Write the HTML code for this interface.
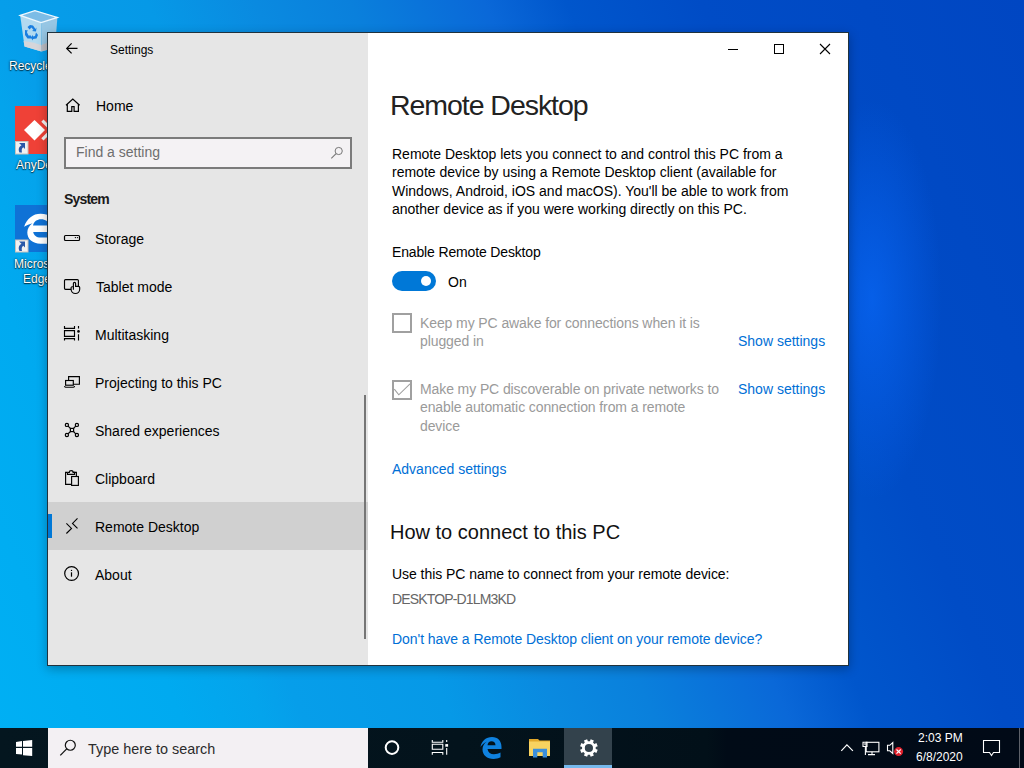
<!DOCTYPE html>
<html><head><meta charset="utf-8">
<style>
*{margin:0;padding:0;box-sizing:border-box}
html,body{width:1024px;height:768px;overflow:hidden}
body{position:relative;font-family:"Liberation Sans",sans-serif;color:#000;
background:linear-gradient(67deg,#00b0f4 0%,#00aaf0 15%,#04a4ec 21%,#069eea 24%,#0699e7 35%,#0a8ae0 43%,#0a80dc 50%,#0a68d8 60%,#0056cc 66%,#004cc6 76%,#0046c2 100%);}
.a{position:absolute}
.t{position:absolute;white-space:nowrap}
.f14{font-size:14px;line-height:18px}
#desk2{position:absolute;left:0;top:0;width:1024px;height:768px;
background:radial-gradient(ellipse 70px 200px at 872px 300px,rgba(10,108,255,.6),rgba(10,108,255,0) 100%);}
.dtxt{position:absolute;color:#fff;font-size:12px;line-height:14px;text-shadow:0 0 2px rgba(0,0,0,.9),0 1px 1px rgba(0,0,0,.6);white-space:nowrap}
#win{position:absolute;left:47px;top:32px;width:802px;height:634px;border:1px solid rgba(8,28,40,.9);background:#fff;
box-shadow:0 3px 10px rgba(0,0,0,.28)}
#taskbar{position:absolute;left:0;top:728px;width:1024px;height:40px;background:linear-gradient(to right,#04161f 0%,#03131c 45%,#021019 69%,#010b17 71%,#010a17 100%)}
svg{overflow:visible}
</style></head><body>
<div id="desk2"></div>

<!-- Desktop icons -->
<svg class="a" style="left:0;top:0" width="64" height="60" viewBox="0 0 64 60">
  <path d="M20.2 15.4 L41.1 22.6 L41.4 51.6 L24.5 46.4Z" fill="#b2daf0"/>
  <path d="M41.1 22.6 L57.4 17.4 L55 47.7 L41.4 51.6Z" fill="#96c6e4"/>
  <path d="M20.2 15.4 L34.9 10.6 L57.4 17.4 L41.1 22.6Z" fill="#7cbce6"/>
  <path d="M23.6 41 Q33 42 41.3 45 L41.4 51.6 L24.5 46.4Z" fill="#d6d6da"/>
  <path d="M41.3 45 Q48 42 55.5 41 L55 47.7 L41.4 51.6Z" fill="#bcbcc2"/>
  <path d="M20.2 15.4 L34.9 10.6 L57.4 17.4 L41.1 22.6Z" fill="none" stroke="#eef8fe" stroke-width="1.3"/>
  <g fill="#1a7ee0">
    <path d="M27.5 27 L30 25 L33 25.5 L35.5 29 L36.5 27.5 L36 31.5 L32 31 L33.5 30 L31.5 27.5 L29.5 29.5Z"/>
    <path d="M25 30 L28 30.5 L26.8 32 L28.5 35.5 L31 35.5 L31 38.5 L27.5 38.5 L25 35 Z"/>
    <path d="M36 32.5 L38 35 L36.5 38.5 L33 39 L33 40.5 L30.5 37.5 L33 35 L33 36.5 L35 36 Z"/>
  </g>
</svg>
<div class="dtxt" style="left:9px;top:59px">Recycle Bin</div>

<div class="a" style="left:15px;top:106px;width:48px;height:48px;background:#ef4137"></div>
<svg class="a" style="left:15px;top:106px" width="48" height="48" viewBox="0 0 48 48">
  <path d="M19.5 14 L30 24 L19.5 34.5 L9 24Z" fill="#fff"/>
  <path d="M28.5 13.5 L39 24 L28.5 34.5 L26.3 32.3 L34.6 24 L26.3 15.7Z" fill="#f4f4f4"/>
  <rect x="0.5" y="35.5" width="12.5" height="12.5" fill="#f2f2f2" stroke="#c9c2bc" stroke-width="1"/>
  <path d="M4 37 H10 V43 L8.3 41.3 C6.5 42.5 6.5 44.5 7 46.5 H4.5 C3.2 44 3.5 41 6.5 39.3 Z" fill="#2a58a8"/>
</svg>
<div class="dtxt" style="left:16px;top:158px">AnyDesk</div>

<div class="a" style="left:15px;top:205px;width:48px;height:47px;background:#0f72d6"></div>
<svg class="a" style="left:15px;top:205px" width="48" height="47" viewBox="0 0 48 47">
  <path fill="#fff" fill-rule="evenodd" d="M9.1 21.8 C12 13.5 18 8.8 25.5 8.8 C35 8.8 42 14 42 22 V27 H18.2 C18.8 30.5 21.5 32.5 25.5 32.5 H42 V38.7 H25.5 C17.5 38.7 12.3 34 12.3 27.5 C12.3 23.5 14.5 20.5 17.5 18.3 C14.5 19 11.5 20.3 9.1 21.8 Z M18 20.5 H34 C33.5 16.5 30.5 14.3 26 14.3 C22 14.3 19 16.5 18 20.5 Z"/>
  <rect x="0.5" y="35" width="12.5" height="12" fill="#f2f2f2" stroke="#c9c2bc" stroke-width="1"/>
  <path d="M4 36.5 H10 V42.5 L8.3 40.8 C6.5 42 6.5 44 7 46 H4.5 C3.2 43.5 3.5 40.5 6.5 38.8 Z" fill="#2a58a8"/>
</svg>
<div class="dtxt" style="left:14px;top:257px">Microsoft</div>
<div class="dtxt" style="left:23px;top:272px">Edge</div>

<!-- Window -->
<div id="win"></div>
<div class="a" style="left:48px;top:33px;width:320px;height:632px;background:#e6e6e6"></div>
<div class="a" style="left:368px;top:33px;width:480px;height:632px;background:#fff"></div>

<!-- Sidebar -->
<svg class="a" style="left:60px;top:37px" width="24" height="24" viewBox="0 0 24 24"><path d="M17.5 11.4 H6.9 M11.6 6.4 L6.7 11.4 L11.6 16.4" fill="none" stroke="#000" stroke-width="1.2"/></svg>
<div class="t" style="left:110px;top:42px;font-size:12px;line-height:16px">Settings</div>

<svg class="a" style="left:60px;top:93px" width="24" height="24" viewBox="0 0 24 24"><path d="M6 12.3 L12.8 6 L19.6 12.3 M7.3 11.2 V18.3 H11.8 V13.6 H14.1 V18.3 H18.4 V11.2" fill="none" stroke="#000" stroke-width="1.2" stroke-linejoin="miter"/></svg>
<div class="t f14" style="left:96px;top:97px">Home</div>

<div class="a" style="left:64px;top:137px;width:288px;height:32px;border:2px solid #7b7b7b;background:#f4f2f4"></div>
<div class="t f14" style="left:76px;top:143px;color:#6e6e6e">Find a setting</div>
<svg class="a" style="left:328px;top:144px" width="16" height="16" viewBox="0 0 16 16"><circle cx="10.7" cy="7" r="3.6" fill="none" stroke="#777" stroke-width="1"/><path d="M8.1 9.6 L3.3 14.4" stroke="#777" stroke-width="1.1"/></svg>

<div class="t" style="left:64px;top:190px;font-size:14px;line-height:18px;font-weight:bold;letter-spacing:-0.8px;color:#1a1a1a">System</div>

<!-- nav items -->
<svg class="a" style="left:60px;top:226px" width="24" height="24" viewBox="0 0 24 24"><rect x="4.5" y="9.5" width="15" height="5" rx="1" fill="none" stroke="#000" stroke-width="1.2"/><circle cx="15.4" cy="11.6" r=".7"/><circle cx="17.5" cy="11.6" r=".7"/></svg>
<div class="t f14" style="left:95px;top:230px">Storage</div>

<svg class="a" style="left:60px;top:274px" width="24" height="24" viewBox="0 0 24 24"><g fill="none" stroke="#000" stroke-width="1.15"><path d="M11.1 15.3 H5.5 Q4.5 15.3 4.5 14.3 V6.6 Q4.5 5.6 5.5 5.6 H17.4 Q18.4 5.6 18.4 6.6 V12.3"/><path d="M13.4 15.8 V9.4 A1.1 1.1 0 0 1 15.6 9.4 V12.3 H18.4 Q19.7 12.3 19.7 13.6 V15.3 A4.3 4.2 0 0 1 11.1 15.3 V13.6 Q11.1 12.5 13.4 12.5"/></g></svg>
<div class="t f14" style="left:96px;top:278px">Tablet mode</div>

<svg class="a" style="left:60px;top:320px" width="24" height="24" viewBox="0 0 24 24"><g fill="none" stroke="#000" stroke-width="1.15"><path d="M4.5 6 V8.4 H14.5 V6 M4.5 10.6 H14.5 V16.4 H4.5 Z M4.5 20.5 V18.6 H14.5 V20.5 M18.5 6 V8.4 M18.5 14.2 V20.5"/></g><circle cx="18.5" cy="11.4" r="1.3"/></svg>
<div class="t f14" style="left:95px;top:326px">Multitasking</div>

<svg class="a" style="left:60px;top:370px" width="24" height="24" viewBox="0 0 24 24"><g fill="none" stroke="#000" stroke-width="1.15"><path d="M8.6 10.5 V6.6 H19.4 V14.2 H13.3"/><rect x="5.6" y="10.5" width="7.7" height="4.7"/><path d="M4.6 16 Q4.6 17.2 5.6 17.2 H13.5 Q14.5 17.2 14.5 16"/></g></svg>
<div class="t f14" style="left:95px;top:374px">Projecting to this PC</div>

<svg class="a" style="left:60px;top:418px" width="24" height="24" viewBox="0 0 24 24"><g fill="none" stroke="#000" stroke-width="1.2"><circle cx="6.9" cy="6.9" r="1.6"/><circle cx="16.9" cy="6.9" r="1.6"/><circle cx="6.9" cy="17" r="1.6"/><circle cx="16.9" cy="17" r="1.6"/><rect x="10.4" y="10.4" width="3.2" height="3.2"/><path d="M8.1 8.1 L10.4 10.4 M15.7 8.1 L13.6 10.4 M8.1 15.8 L10.4 13.6 M15.7 15.8 L13.6 13.6"/></g></svg>
<div class="t f14" style="left:95px;top:422px">Shared experiences</div>

<svg class="a" style="left:60px;top:466px" width="24" height="24" viewBox="0 0 24 24"><g fill="none" stroke="#000" stroke-width="1.15"><path d="M11.4 18.4 H5.6 V6.4 H7.5 M13.1 6.4 H16.4 V10.4"/><path d="M7.5 6.4 V8.3 H14.6 V6.4 H13.1 Q13.1 4.6 11.1 4.6 Q9.3 4.6 9.3 6.4 H7.5"/><rect x="11.6" y="10.5" width="6.8" height="8.9"/></g></svg>
<div class="t f14" style="left:95px;top:470px">Clipboard</div>

<div class="a" style="left:48px;top:502px;width:320px;height:48px;background:#d0d0d0"></div>
<div class="a" style="left:48px;top:514px;width:4px;height:24px;background:#0078d7"></div>
<svg class="a" style="left:60px;top:514px" width="24" height="24" viewBox="0 0 24 24"><path d="M6.4 9.4 L11.5 14.4 L6.4 19.5 M17.5 4.4 L12.5 9.4 L17.5 14.4" fill="none" stroke="#000" stroke-width="1.1"/></svg>
<div class="t f14" style="left:95px;top:518px">Remote Desktop</div>

<svg class="a" style="left:60px;top:562px" width="24" height="24" viewBox="0 0 24 24"><circle cx="11.6" cy="11.5" r="6.9" fill="none" stroke="#000" stroke-width="1.2"/><circle cx="11.5" cy="8.4" r=".7"/><path d="M11.5 10.3 V14.7" stroke="#000" stroke-width="1.2"/></svg>
<div class="t f14" style="left:95px;top:566px">About</div>

<div class="a" style="left:364px;top:395px;width:2px;height:244px;background:#767676"></div>

<!-- Title buttons -->
<div class="a" style="left:728px;top:49px;width:10px;height:1px;background:#000"></div>
<div class="a" style="left:774px;top:44px;width:10px;height:10px;border:1px solid #000"></div>
<svg class="a" style="left:819px;top:43px" width="12" height="12" viewBox="0 0 12 12"><path d="M1 1 L11 11 M11 1 L1 11" stroke="#000" stroke-width="1.1"/></svg>

<!-- Content -->
<div class="t" style="left:390px;top:87px;font-size:28.5px;line-height:36px;letter-spacing:-1.05px;color:#222">Remote Desktop</div>

<div class="t" style="left:392px;top:145px;font-size:14px;line-height:18.4px">Remote Desktop lets you connect to and control this PC from a<br>remote device by using a Remote Desktop client (available for<br>Windows, Android, iOS and macOS). You'll be able to work from<br>another device as if you were working directly on this PC.</div>

<div class="t f14" style="left:392px;top:243px;letter-spacing:-0.15px">Enable Remote Desktop</div>
<div class="a" style="left:392px;top:271px;width:44px;height:20px;border-radius:10px;background:#0078d7"></div>
<div class="a" style="left:421px;top:276px;width:10px;height:10px;border-radius:5px;background:#fff"></div>
<div class="t f14" style="left:448px;top:273px">On</div>

<div class="a" style="left:392px;top:313px;width:20px;height:20px;border:2px solid #a0a0a0"></div>
<div class="t" style="left:420px;top:314px;font-size:14px;line-height:18.4px;color:#9a9a9a;letter-spacing:-0.1px">Keep my PC awake for connections when it is<br>plugged in</div>
<div class="t f14" style="left:738px;top:332px;color:#006fd6">Show settings</div>

<div class="a" style="left:392px;top:380px;width:20px;height:20px;border:2px solid #a0a0a0"></div>
<svg class="a" style="left:392px;top:380px" width="20" height="20" viewBox="0 0 20 20"><path d="M2.3 9.2 L6.8 14.8 L18 3.8" fill="none" stroke="#a0a0a0" stroke-width="1.1"/></svg>
<div class="t" style="left:420px;top:380px;font-size:14px;line-height:18.4px;color:#9a9a9a;letter-spacing:-0.1px">Make my PC discoverable on private networks to<br>enable automatic connection from a remote<br>device</div>
<div class="t f14" style="left:738px;top:380px;color:#006fd6">Show settings</div>

<div class="t f14" style="left:392px;top:460px;color:#006fd6">Advanced settings</div>

<div class="t" style="left:390px;top:518px;font-size:20px;line-height:28px;color:#111">How to connect to this PC</div>
<div class="t f14" style="left:392px;top:565px;letter-spacing:-0.05px">Use this PC name to connect from your remote device:</div>
<div class="t f14" style="left:392px;top:590px;color:#666;letter-spacing:-0.85px">DESKTOP-D1LM3KD</div>
<div class="t f14" style="left:392px;top:630px;color:#006fd6;letter-spacing:-0.05px">Don't have a Remote Desktop client on your remote device?</div>

<!-- Taskbar -->
<div id="taskbar"></div>
<svg class="a" style="left:16px;top:740px" width="16" height="16" viewBox="0 0 16 16"><path d="M0 1.9 L6 1 V6.8 H0Z M7 0.9 L16.2 -0.1 V6.8 H7Z M0 8 H6 V14.6 L0 14Z M7 8 H16.2 V16 L7 15.2Z" fill="#fff"/></svg>
<div class="a" style="left:48px;top:728px;width:320px;height:40px;background:#f3f0f3"></div>
<svg class="a" style="left:52px;top:732px" width="32" height="32" viewBox="0 0 32 32"><circle cx="18.3" cy="13.25" r="5" fill="none" stroke="#111" stroke-width="1.2"/><path d="M14.7 16.9 L8.3 23.4" stroke="#111" stroke-width="1.3"/></svg>
<div class="t" style="left:88px;top:740px;font-size:14.4px;line-height:18px;color:#2b2b2b">Type here to search</div>

<svg class="a" style="left:376px;top:732px" width="32" height="32" viewBox="0 0 32 32"><circle cx="16" cy="15.6" r="6.3" fill="none" stroke="#fff" stroke-width="2"/></svg>
<svg class="a" style="left:428px;top:736px" width="24" height="24" viewBox="0 0 24 24"><g fill="none" stroke="#fff" stroke-width="1.1"><path d="M4.3 4 V6.2 H14.8 V4 M4.3 8.3 H14.8 V13.2 H4.3Z M4.3 18.8 V16.5 H14.8 V18.8 M18.7 4 V6 M18.7 12 V18.8"/></g><rect x="17.3" y="8.1" width="2.8" height="2.6" fill="#fff"/></svg>
<svg class="a" style="left:480px;top:737px" width="22" height="22" viewBox="0 0 22 22"><path d="M0.5 10 C1.5 4 6 0 12 0 C18 0 21.5 4 21.5 10 L21.5 12 L7.5 12 C8 15.5 10.5 17.2 14 17.2 C16.5 17.2 18.5 16.6 20.5 15.5 L20.5 20.3 C18.5 21.5 16 22 13.5 22 C7 22 2.5 18 2.5 12.5 C2.5 9 4 6.5 7 4.5 C4.5 5.5 2 7.5 0.5 10 Z M7.5 8.2 L15.5 8.2 C15.5 5.8 13.8 4.3 11.5 4.3 C9.3 4.3 7.8 5.8 7.5 8.2 Z" fill="#0f82e0"/></svg>
<svg class="a" style="left:529px;top:739px" width="22" height="19" viewBox="0 0 22 19"><path d="M0 0 H9 L10.5 1.5 H21 V4 H0Z" fill="#e2a82a"/><rect x="0" y="2.5" width="21" height="14.5" fill="#f8d360"/><path d="M4 18.5 V9.8 H18 V18.5 H13.7 V13.3 H8.3 V18.5Z" fill="#3b8fdb"/></svg>

<div class="a" style="left:564px;top:728px;width:48px;height:37px;background:#33424c"></div>
<div class="a" style="left:564px;top:765px;width:48px;height:3px;background:#76b9ed"></div>

<svg class="a" style="left:572px;top:732px" width="32" height="32" viewBox="0 0 32 32"><g transform="translate(16.9 16)"><path fill="#fff" fill-rule="evenodd" d="M1.02 -6.82 L1.79 -8.82 L4.97 -7.50 L4.10 -5.55 L5.55 -4.10 L7.50 -4.97 L8.82 -1.79 L6.82 -1.02 L6.82 1.02 L8.82 1.79 L7.50 4.97 L5.55 4.10 L4.10 5.55 L4.97 7.50 L1.79 8.82 L1.02 6.82 L-1.02 6.82 L-1.79 8.82 L-4.97 7.50 L-4.10 5.55 L-5.55 4.10 L-7.50 4.97 L-8.82 1.79 L-6.82 1.02 L-6.82 -1.02 L-8.82 -1.79 L-7.50 -4.97 L-5.55 -4.10 L-4.10 -5.55 L-4.97 -7.50 L-1.79 -8.82 L-1.02 -6.82Z M0 -4.1 A4.1 4.1 0 1 0 0 4.1 A4.1 4.1 0 1 0 0 -4.1Z"/></g></svg>

<svg class="a" style="left:836px;top:736px" width="24" height="24" viewBox="0 0 24 24"><path d="M5.3 14.8 L10.9 8.8 L16.9 14.8" fill="none" stroke="#fff" stroke-width="1.2"/></svg>
<svg class="a" style="left:860px;top:738px" width="24" height="20" viewBox="0 0 24 20"><g fill="none" stroke="#fff" stroke-width="1.1"><rect x="6.2" y="4.3" width="12.7" height="9.5"/><path d="M12 13.8 V16.6 M8 16.6 H15 M3 4.3 H7 V8.5 H3 Z M5.4 8.5 V17"/></g><path d="M3.8 5.5 L6.2 5.5 L5 7.2Z" fill="#fff"/></svg>
<svg class="a" style="left:884px;top:738px" width="24" height="20" viewBox="0 0 24 20"><path d="M3.5 7.3 H5.8 L8.8 4.5 V15.5 L5.8 12.8 H3.5Z" fill="none" stroke="#fff" stroke-width="1.1"/><circle cx="14.6" cy="13.6" r="4.5" fill="#e0202c"/><path d="M12.5 11.5 L16.7 15.7 M16.7 11.5 L12.5 15.7" stroke="#fff" stroke-width="1.2"/></svg>
<div class="t" style="left:918px;top:731px;font-size:12px;line-height:15px;color:#fff">2:03 PM</div>
<div class="t" style="left:916px;top:750px;font-size:12px;line-height:15px;color:#fff">6/8/2020</div>
<svg class="a" style="left:980px;top:736px" width="24" height="24" viewBox="0 0 24 24"><path d="M3.5 4.5 H19.5 V16.5 H13.5 L11.5 19.5 L9.5 16.5 H3.5Z" fill="none" stroke="#fff" stroke-width="1.1"/></svg>
<div class="a" style="left:1019px;top:728px;width:1px;height:40px;background:#5e626a"></div>
</body></html>
